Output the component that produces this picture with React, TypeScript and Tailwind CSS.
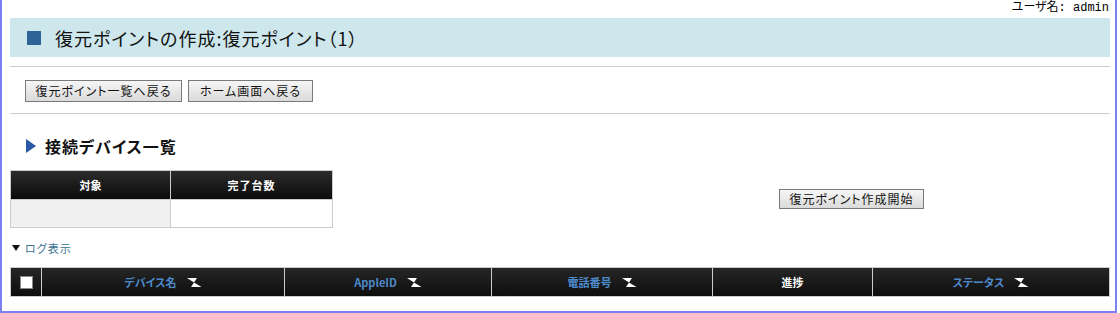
import type { ReactNode } from "react";

const FONT = "font-['Noto_Sans_CJK_JP','Noto_Sans',sans-serif]";

function SortIcon() {
  return (
    <svg width="15" height="9" viewBox="0 0 15 9" className="shrink-0">
      <polygon points="0,0 10,0 7,4.5" fill="#fff" />
      <polygon points="7,4.5 14.5,9 4,9" fill="#fff" />
    </svg>
  );
}

function GrayButton({ children, className = "" }: { children: ReactNode; className?: string }) {
  return (
    <button
      type="button"
      className={`flex items-center justify-center border border-[#7a7a7a] bg-linear-to-b from-[#f6f6f6] to-[#dadada] text-[12px] leading-none tracking-[1px] text-[#111] ${className}`}
    >
      {children}
    </button>
  );
}

const DEVICE_COLUMNS: { label: string; width: string; sortable: boolean }[] = [
  { label: "デバイス名", width: "w-[243px]", sortable: true },
  { label: "AppleID", width: "w-[207px]", sortable: true },
  { label: "電話番号", width: "w-[221px]", sortable: true },
  { label: "進捗", width: "w-[160px]", sortable: false },
  { label: "ステータス", width: "flex-1", sortable: true },
];

export default function App() {
  return (
    <div
      className={`h-[313px] w-[1117px] border-x-2 border-b-2 border-[#7b80f2] bg-white pl-2 pr-[5px] ${FONT} [font-feature-settings:'palt']`}
    >
      {/* ユーザ名 */}
      <div className="flex h-[18px] items-start justify-end pr-[1px] pt-[1px] text-[12px] leading-[14px] text-black font-['Liberation_Mono','Noto_Sans_CJK_JP',monospace]">
        ユーザ名: admin
      </div>

      {/* タイトル */}
      <div className="flex h-[39px] items-center bg-[#cde7ec] pl-[17px]">
        <span className="h-[14px] w-[14px] bg-[#2d6396]" />
        <h1 className="ml-[14px] text-[18px] leading-none tracking-[1px] text-[#111]">
          復元ポイントの作成:復元ポイント（1）
        </h1>
      </div>

      <div className="mt-[9px] border-t border-[#cfcfcf]" />

      <div className="mt-[13px] flex gap-[6px] pl-[15px]">
        <GrayButton className="h-[22px] w-[157px]">復元ポイント一覧へ戻る</GrayButton>
        <GrayButton className="h-[22px] w-[125px]">ホーム画面へ戻る</GrayButton>
      </div>

      <div className="mt-[11px] border-t border-[#cfcfcf]" />

      {/* 接続デバイス一覧 */}
      <div className="mt-[22px] flex h-[20px] items-center pl-[16px]">
        <svg width="10" height="14" viewBox="0 0 10 14">
          <polygon points="0,0 10,7 0,14" fill="#2a58a6" />
        </svg>
        <h2 className="ml-[9px] text-[16px] font-bold leading-none tracking-[1px] text-[#111]">
          接続デバイス一覧
        </h2>
      </div>

      <div className="mt-[14px] flex items-center">
        <div className="w-[323px] border border-[#cccccc]">
          <div className="flex h-[28px] bg-linear-to-b from-[#2c2c2c] to-[#0c0c0c] text-[11px] font-bold text-white">
            <div className="flex w-[160px] items-center justify-center border-r border-[#cccccc]">対象</div>
            <div className="flex flex-1 items-center justify-center tracking-[1px]">完了台数</div>
          </div>
          <div className="flex h-[28px] border-t border-[#cccccc]">
            <div className="w-[160px] border-r border-[#cccccc] bg-[#f0f0f0]" />
            <div className="flex-1 bg-white" />
          </div>
        </div>
        <GrayButton className="ml-[446px] h-[20px] w-[145px]">復元ポイント作成開始</GrayButton>
      </div>

      {/* ログ表示 */}
      <div className="mt-[10px] flex h-[20px] items-center pl-[2px] text-[11px] leading-none text-[#3a6f8e]">
        <svg width="8" height="6" viewBox="0 0 8 6">
          <polygon points="0,0 8,0 4,6" fill="#111" />
        </svg>
        <span className="ml-[5px] tracking-[1px]">ログ表示</span>
      </div>

      {/* デバイス一覧 */}
      <div className="mt-[9px] flex h-[30px] border border-[#cccccc] bg-linear-to-b from-[#262626] to-[#0e0e0e] text-[11px] font-bold">
        <div className="flex w-[31px] items-center justify-center border-r border-[#cccccc]">
          <span className="h-[13px] w-[13px] border border-[#888] bg-white" />
        </div>
        {DEVICE_COLUMNS.map((col, i) => (
          <div
            key={col.label}
            className={`flex items-center justify-center gap-[10px] ${col.width} ${
              i < DEVICE_COLUMNS.length - 1 ? "border-r border-[#cccccc]" : ""
            }`}
          >
            <span className={col.sortable ? "text-[#4d8acb]" : "text-white"}>{col.label}</span>
            {col.sortable && <SortIcon />}
          </div>
        ))}
      </div>
    </div>
  );
}
